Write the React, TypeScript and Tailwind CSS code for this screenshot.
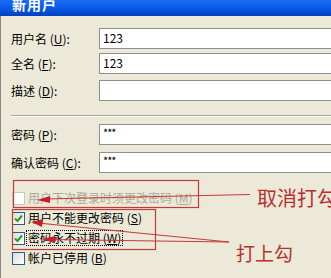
import React from 'react';

const FONT = '"Noto Sans CJK SC", "Liberation Sans", sans-serif';

const Field: React.FC<{ label: string; hot: string; value?: string; className?: string; stars?: boolean }> = ({ label, hot, value, className = '', stars }) => (
    <div className={`flex items-center h-[21px] ${className}`}>
        <div className="w-[88px] text-[12px] text-black leading-none whitespace-nowrap">
            {label} (<u>{hot}</u>):
        </div>
        <div className="w-[240px] h-[21px] bg-white border border-[#8f8f8f] border-r-0 pl-[3px] text-[12px] leading-none text-black">
            <div className={stars ? 'pt-[2px] text-[11px] tracking-[-1px]' : 'pt-[3px]'}>{value}</div>
        </div>
    </div>
);

const CheckBox: React.FC<{ checked?: boolean; disabled?: boolean }> = ({ checked, disabled }) => (
    <div
        className={`w-[13px] h-[13px] shrink-0 border flex items-center justify-center ${
            disabled ? 'border-[#cac8bb] bg-white' : 'border-[#2f5d8a] bg-gradient-to-br from-[#dcdcd7] to-white'
        }`}
    >
        {checked && (
            <svg width="9" height="9" viewBox="0 0 9 9">
                <path d="M1 4.5 L3.5 7 L8 1.5" fill="none" stroke="#21a121" strokeWidth="2" />
            </svg>
        )}
    </div>
);

const CheckRow: React.FC<{ text: string; hot: string; checked?: boolean; disabled?: boolean; focus?: boolean }> = ({ text, hot, checked, disabled, focus }) => (
    <div className="flex items-center h-[20px] gap-[1px]">
        <CheckBox checked={checked} disabled={disabled} />
        <span
            className={`text-[12px] leading-none whitespace-nowrap px-[1px] py-[1px] ${disabled ? 'text-[#aca899]' : 'text-black'} ${
                focus ? 'border border-dotted border-black' : 'border border-transparent'
            }`}
        >
            {text} (<u>{hot}</u>)
        </span>
    </div>
);

export default function App() {
    return (
        <div className="w-[331px] h-[278px] overflow-hidden relative bg-white" style={{ fontFamily: FONT }}>
            <div className="h-[16px] bg-gradient-to-b from-[#1a6cf4] via-[#0a5ae8] to-[#0340c0] overflow-hidden pl-[12px]">
                <div className="-mt-[5px] text-white font-bold text-[14px] leading-[18px] tracking-[1px]">新用户</div>
            </div>
            <div className="flex h-[262px]">
                <div className="w-[7px] bg-white" />
                <div className="flex-1 border-l border-[#8a8a8a] bg-[#ece9d8] pt-[12px] pl-[10px]">
                    <Field label="用户名" hot="U" value="123" />
                    <Field label="全名" hot="F" value="123" className="mt-[4px]" />
                    <Field label="描述" hot="D" className="mt-[6px]" />
                    <div className="mt-[14px] border-t border-[#aca899] border-b border-b-white" />
                    <Field label="密码" hot="P" value="***" stars className="mt-[7px]" />
                    <Field label="确认密码" hot="C" value="***" stars className="mt-[7px]" />
                    <div className="mt-[15px] pl-[1px] flex flex-col">
                        <CheckRow text="用户下次登录时须更改密码" hot="M" disabled />
                        <CheckRow text="用户不能更改密码" hot="S" checked />
                        <CheckRow text="密码永不过期" hot="W" checked focus />
                        <CheckRow text="帐户已停用" hot="B" />
                    </div>
                </div>
            </div>

            <svg className="absolute inset-0 pointer-events-none" width="331" height="278" viewBox="0 0 331 278">
                <g stroke="#c23a3a" strokeWidth="1.2" fill="none">
                    <rect x="13.5" y="180.5" width="185" height="27" />
                    <rect x="12.5" y="209.5" width="143" height="40" />
                    <line x1="44" y1="199" x2="250" y2="194.5" />
                    <line x1="38" y1="223" x2="229" y2="242" />
                    <line x1="48" y1="239.5" x2="229" y2="242" />
                </g>
                <g fill="#c8202a">
                    <polygon points="37,200 50,196 50,203" />
                    <polygon points="31,222 43,219 42,227" />
                    <polygon points="42,239 55,236 55,243" />
                </g>
            </svg>
            <div className="absolute left-[257px] top-[186px] text-[20px] leading-[24px] text-[#b8302e] whitespace-nowrap">取消打勾</div>
            <div className="absolute left-[236px] top-[241px] text-[19px] leading-[23px] text-[#b8302e] whitespace-nowrap">打上勾</div>
        </div>
    );
}
